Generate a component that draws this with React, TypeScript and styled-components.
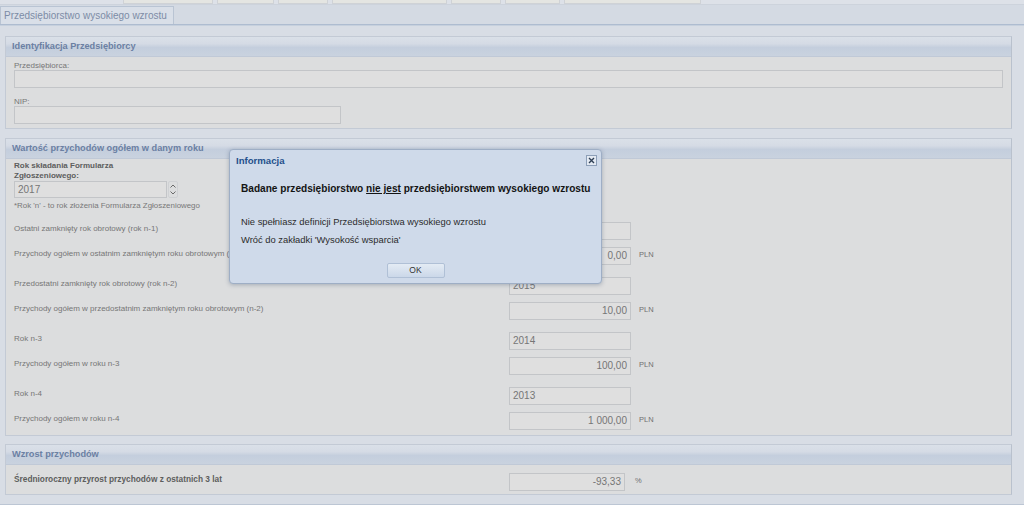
import React from 'react';
import styled, { createGlobalStyle } from 'styled-components';

const Global = createGlobalStyle`
  html, body { margin: 0; padding: 0; }
  body {
    background: #d8dde5;
    font-family: "Liberation Sans", Arial, sans-serif;
    width: 1024px;
    height: 505px;
    overflow: hidden;
  }
`;

const Page = styled.div`
  position: relative;
  width: 1024px;
  height: 505px;
  background: #d8dde5;
`;

const TopStrip = styled.div`
  height: 5px;
  display: flex;
  gap: 4px;
  padding-left: 123px;
  background: #dde1e8;
  border-bottom: 1px solid #cdd3dc;
  box-sizing: border-box;
`;

const Stub = styled.div<{ $w: number }>`
  width: ${p => p.$w}px;
  height: 4px;
  background: #e4e5e2;
  border: 1px solid #cfd2d6;
  border-top: none;
  box-sizing: border-box;
`;

const TabBar = styled.div`
  height: 20px;
  display: flex;
  align-items: flex-end;
  border-bottom: 1px solid #aebcd0;
  box-shadow: 0 1px 0 #c6d0dd;
  background: #d4dae3;
  box-sizing: border-box;
`;

const Tab = styled.div`
  width: 174px;
  height: 18px;
  box-sizing: border-box;
  border: 1px solid #b9c4d3;
  border-bottom: none;
  background: #d9dfe8;
  color: #7d8ca6;
  font-size: 10px;
  line-height: 17px;
  padding-left: 3px;
  white-space: nowrap;
`;

const Content = styled.div`
  padding: 11px 12px 9px 5px;
  border-bottom: 1px solid #bcc6d4;
  display: flex;
  flex-direction: column;
`;

const Section = styled.div<{ $mb: number }>`
  border: 1px solid #c3cad5;
  border-right-color: #b9c1cd;
  background: #dcddde;
  margin-bottom: ${p => p.$mb}px;
`;

const Header = styled.div`
  height: 20px;
  box-sizing: border-box;
  background: linear-gradient(#dae0e8 0%, #d5dbe5 35%, #c4cedd 55%, #c9d2df 100%);
  border-bottom: 1px solid #c0c9d7;
  color: #6b80a3;
  font-weight: bold;
  font-size: 9.2px;
  line-height: 19px;
  padding-left: 6px;
`;

const Body = styled.div<{ $pt: number; $pb: number }>`
  padding: ${p => p.$pt}px 8px ${p => p.$pb}px 8px;
  display: flex;
  flex-direction: column;
`;

const Label = styled.div<{ $mt?: number }>`
  font-size: 8px;
  line-height: 8px;
  color: #767676;
  margin-top: ${p => p.$mt ?? 0}px;
  white-space: nowrap;
`;

const BoldLabel = styled.div`
  font-size: 8px;
  line-height: 10px;
  font-weight: bold;
  color: #5d5d5d;
  white-space: nowrap;
`;

const Note = styled.div`
  font-size: 7.9px;
  line-height: 10px;
  color: #787878;
  margin-top: 3px;
  white-space: nowrap;
`;

const Box = styled.div<{ $w?: number; $h?: number; $right?: boolean }>`
  width: ${p => (p.$w ? `${p.$w}px` : 'auto')};
  height: ${p => p.$h ?? 18}px;
  box-sizing: border-box;
  border: 1px solid #c3c5c8;
  background: #dfdfdf;
  color: #767676;
  font-size: 10px;
  line-height: ${p => (p.$h ?? 18) - 2}px;
  padding: 0 3px;
  text-align: ${p => (p.$right ? 'right' : 'left')};
  white-space: nowrap;
`;

const SpinRow = styled.div`
  display: flex;
  align-items: stretch;
`;

const SpinBtns = styled.div`
  width: 10px;
  height: 17px;
  box-sizing: border-box;
  border: 1px solid #cfd1d4;
  border-radius: 2px;
  display: flex;
  flex-direction: column;
  justify-content: center;
  align-items: center;
  gap: 1px;
  margin-left: 1px;
`;

const Pairs = styled.div`
  display: flex;
  flex-direction: column;
  gap: 12px;
  margin-top: 11px;
`;

const Pair = styled.div`
  display: flex;
  flex-direction: column;
  gap: 7px;
`;

const Row = styled.div<{ $cols: string }>`
  display: grid;
  grid-template-columns: ${p => p.$cols};
  align-items: start;
`;

const RowLabel = styled(Label)`
  padding-top: 3px;
`;

const RowBold = styled(BoldLabel)`
  font-size: 8.3px;
  padding-top: 1px;
`;

const Unit = styled.div<{ $ml: number }>`
  font-size: 7.5px;
  line-height: 10px;
  color: #707070;
  margin-left: ${p => p.$ml}px;
  padding-top: 3px;
`;

const Dialog = styled.div`
  position: absolute;
  left: 229px;
  top: 149px;
  width: 373px;
  height: 135px;
  box-sizing: border-box;
  border: 1px solid #9eaec5;
  border-radius: 4px;
  background: #cfdaea;
  box-shadow: 0 1px 4px rgba(60, 80, 110, 0.35);
  display: flex;
  flex-direction: column;
`;

const TitleBar = styled.div`
  height: 20px;
  display: flex;
  align-items: center;
  justify-content: space-between;
  padding: 0 4px 0 6px;
`;

const Title = styled.div`
  font-size: 9.6px;
  font-weight: bold;
  color: #24508c;
`;

const CloseBtn = styled.div`
  width: 11px;
  height: 11px;
  box-sizing: border-box;
  border: 1px solid #8d9fb8;
  background: #e3e9f2;
  display: flex;
  align-items: center;
  justify-content: center;
  margin-top: 1px;
`;

const DialogBody = styled.div`
  padding: 13px 11px 0 11px;
  display: flex;
  flex-direction: column;
`;

const Lead = styled.div`
  font-size: 10.1px;
  line-height: 12px;
  font-weight: bold;
  color: #141414;
  white-space: nowrap;
  margin-bottom: 21px;
  u { text-decoration: underline; }
`;

const Para = styled.div`
  font-size: 9.4px;
  line-height: 12px;
  color: #2c2c2c;
  margin-bottom: 6px;
  white-space: nowrap;
`;

const BtnRow = styled.div`
  display: flex;
  justify-content: center;
  margin-top: 11px;
`;

const OkButton = styled.div`
  width: 58px;
  height: 15px;
  box-sizing: border-box;
  border: 1px solid #b0c0d6;
  border-radius: 2px;
  background: linear-gradient(#e4ebf4, #cbd8e9);
  font-size: 8.5px;
  line-height: 13px;
  text-align: center;
  color: #333;
`;

const stubs = [90, 57, 50, 115, 50, 55, 137];

const Chevron = ({ up }: { up?: boolean }) => (
  <svg width="8" height="6" viewBox="0 0 8 6">
    <path
      d={up ? 'M1.5 4.5 L4 2 L6.5 4.5' : 'M1.5 1.5 L4 4 L6.5 1.5'}
      fill="none"
      stroke="#6a6a6a"
      strokeWidth="1"
    />
  </svg>
);

const rows: { label: string; value: string; unit?: boolean }[][] = [
  [
    { label: 'Ostatni zamknięty rok obrotowy (rok n-1)', value: '2016' },
    { label: 'Przychody ogółem w ostatnim zamkniętym roku obrotowym (n-1)', value: '0,00', unit: true },
  ],
  [
    { label: 'Przedostatni zamknięty rok obrotowy (rok n-2)', value: '2015' },
    { label: 'Przychody ogółem w przedostatnim zamkniętym roku obrotowym (n-2)', value: '10,00', unit: true },
  ],
  [
    { label: 'Rok n-3', value: '2014' },
    { label: 'Przychody ogółem w roku n-3', value: '100,00', unit: true },
  ],
  [
    { label: 'Rok n-4', value: '2013' },
    { label: 'Przychody ogółem w roku n-4', value: '1 000,00', unit: true },
  ],
];

export default function App() {
  return (
    <Page>
      <Global />
      <TopStrip>
        {stubs.map((w, i) => (
          <Stub key={i} $w={w} />
        ))}
      </TopStrip>
      <TabBar>
        <Tab>Przedsiębiorstwo wysokiego wzrostu</Tab>
      </TabBar>
      <Content>
        <Section $mb={9}>
          <Header>Identyfikacja Przedsiębiorcy</Header>
          <Body $pt={5} $pb={4}>
            <Label>Przedsiębiorca:</Label>
            <Box />
            <Label $mt={10}>NIP:</Label>
            <Box $w={327} />
          </Body>
        </Section>
        <Section $mb={8}>
          <Header>Wartość przychodów ogółem w danym roku</Header>
          <Body $pt={2} $pb={5}>
            <BoldLabel>
              Rok składania Formularza
              <br />
              Zgłoszeniowego:
            </BoldLabel>
            <SpinRow>
              <Box $w={153} $h={17}>2017</Box>
              <SpinBtns>
                <Chevron up />
                <Chevron />
              </SpinBtns>
            </SpinRow>
            <Note>*Rok 'n' - to rok złożenia Formularza Zgłoszeniowego</Note>
            <Pairs>
              {rows.map((pair, i) => (
                <Pair key={i}>
                  {pair.map(r => (
                    <Row key={r.label} $cols="495px 122px auto">
                      <RowLabel>{r.label}</RowLabel>
                      <Box $right={!!r.unit}>{r.value}</Box>
                      {r.unit ? <Unit $ml={8}>PLN</Unit> : <span />}
                    </Row>
                  ))}
                </Pair>
              ))}
            </Pairs>
          </Body>
        </Section>
        <Section $mb={0}>
          <Header>Wzrost przychodów</Header>
          <Body $pt={8} $pb={3}>
            <Row $cols="495px 116px auto">
              <RowBold>Średnioroczny przyrost przychodów z ostatnich 3 lat</RowBold>
              <Box $right>-93,33</Box>
              <Unit $ml={10}>%</Unit>
            </Row>
          </Body>
        </Section>
      </Content>

      <Dialog>
        <TitleBar>
          <Title>Informacja</Title>
          <CloseBtn>
            <svg width="7" height="7" viewBox="0 0 7 7">
              <path d="M1 1 L6 6 M6 1 L1 6" stroke="#2f3f55" strokeWidth="1.4" />
            </svg>
          </CloseBtn>
        </TitleBar>
        <DialogBody>
          <Lead>
            Badane przedsiębiorstwo <u>nie jest</u> przedsiębiorstwem wysokiego wzrostu
          </Lead>
          <Para>Nie spełniasz definicji Przedsiębiorstwa wysokiego wzrostu</Para>
          <Para>Wróć do zakładki 'Wysokość wsparcia'</Para>
          <BtnRow>
            <OkButton>OK</OkButton>
          </BtnRow>
        </DialogBody>
      </Dialog>
    </Page>
  );
}
